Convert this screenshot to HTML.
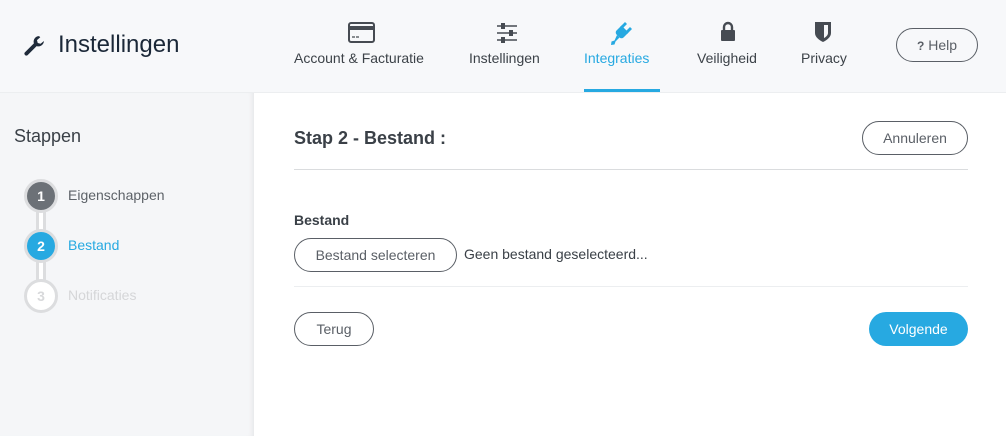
<!DOCTYPE html>
<html><head><meta charset="utf-8"><style>
*{box-sizing:border-box;margin:0;padding:0}
body{width:1006px;height:436px;overflow:hidden;background:#f7f8fa;font-family:"Liberation Sans",sans-serif;position:relative;color:#4a4f55}
.abs{position:absolute}
.nav{position:absolute;top:50px;font-size:14px;color:#3c4248;white-space:nowrap}
.ico{position:absolute}
.btn{position:absolute;border:1px solid #5a5f66;border-radius:17px;font-size:14px;color:#5a5f66;text-align:center;background:#fff}
.circ{position:absolute;left:24px;width:34px;height:34px;border-radius:50%;border:3px solid #dcdddf;font-size:14px;font-weight:bold;text-align:center;line-height:28px}
</style></head><body>
<svg class="ico" style="left:23px;top:35px" width="22" height="22" viewBox="0 0 20 20"><path d="M14.5 1a5 5 0 0 0-4.6 6.6L1.6 15.9a1.8 1.8 0 0 0 2.5 2.5l8.3-8.3A5 5 0 0 0 19 5.5l-3 2.5-2.6-.7-.7-2.6 3-2.6A5 5 0 0 0 14.5 1z" fill="#1f2b3a"/></svg>
<div class="abs" style="left:58px;top:31px;font-size:24px;color:#1b2838">Instellingen</div>

<svg class="ico" style="left:348px;top:22px" width="27" height="21" viewBox="0 0 27 21"><rect x="1" y="1" width="25" height="19" rx="2" fill="none" stroke="#464b52" stroke-width="2"/><rect x="1" y="4" width="25" height="4" fill="#464b52"/><path d="M4 15h3M8 15h3" stroke="#464b52" stroke-width="1.2"/></svg>
<div class="nav" style="left:294px">Account &amp; Facturatie</div>

<svg class="ico" style="left:496px;top:23px" width="22" height="20" viewBox="0 0 22 20"><path d="M1 3h20M1 10h20M1 17h20" stroke="#464b52" stroke-width="1.6"/><rect x="5" y="0" width="4" height="6" fill="#464b52"/><rect x="13" y="7" width="4" height="6" fill="#464b52"/><rect x="5" y="14" width="4" height="6" fill="#464b52"/></svg>
<div class="nav" style="left:469px">Instellingen</div>

<svg class="ico" style="left:608px;top:20px" width="26" height="26" viewBox="0 0 26 26"><g fill="#27a9e1"><path d="M6.5 12.5l7-7 7 7-5 5a3 3 0 0 1-4 0l-3-3a3 3 0 0 1 0-4z"/><path d="M12 7l5-5 2 2-5 5zM17 12l5-5 2 2-5 5z"/><path d="M9 15l2.5 2.5-4 4-1 3-3.5.5.5-3.5 3-1z"/></g></svg>
<div class="nav" style="left:584px;color:#27a9e1">Integraties</div>
<div class="abs" style="left:584px;top:89px;width:76px;height:3px;background:#27a9e1"></div>

<svg class="ico" style="left:720px;top:21px" width="16" height="20" viewBox="0 0 16 20"><path d="M4 9V6a4 4 0 0 1 8 0v3" fill="none" stroke="#464b52" stroke-width="2.4"/><rect x="1" y="9" width="14" height="11" rx="1" fill="#464b52"/></svg>
<div class="nav" style="left:697px">Veiligheid</div>

<svg class="ico" style="left:814px;top:21px" width="18" height="22" viewBox="0 0 18 22"><path d="M1 1h16v11c0 4-4 7-8 9-4-2-8-5-8-9z" fill="#464b52"/><path d="M10 4h4v8c0 2-2 4-4 5z" fill="#f7f8fa"/></svg>
<div class="nav" style="left:801px">Privacy</div>

<div class="btn" style="left:896px;top:28px;width:82px;height:34px;line-height:32px;background:transparent;color:#5a5f66"><b style="font-size:12px">?</b> Help</div>

<div class="abs" style="left:0;top:92px;width:1006px;height:1px;background:#eceef0"></div>
<div class="abs" style="left:0;top:93px;width:254px;height:343px;background:#f5f6f8;box-shadow:inset -5px 0 6px -4px rgba(0,0,0,.08)"></div>
<div class="abs" style="left:254px;top:93px;width:752px;height:343px;background:#fff"></div>

<div class="abs" style="left:14px;top:126px;font-size:18px;color:#3a4047">Stappen</div>
<div class="abs" style="left:36px;top:210px;width:10px;height:74px;background:#dcdddf"></div>
<div class="abs" style="left:39px;top:205px;width:4px;height:84px;background:#fff"></div>
<div class="circ" style="top:179px;background:#6c7177;color:#fff">1</div>
<div class="circ" style="top:229px;background:#27a9e1;color:#fff">2</div>
<div class="circ" style="top:279px;background:#fff;color:#d8d9db">3</div>
<div class="abs" style="left:68px;top:187px;font-size:14px;color:#5d6268">Eigenschappen</div>
<div class="abs" style="left:68px;top:237px;font-size:14px;color:#27a9e1">Bestand</div>
<div class="abs" style="left:68px;top:287px;font-size:14px;color:#d5d6d8">Notificaties</div>

<div class="abs" style="left:294px;top:128px;font-size:18px;color:#3a4047;font-weight:bold">Stap 2 - Bestand :</div>
<div class="btn" style="left:862px;top:121px;width:106px;height:34px;line-height:32px">Annuleren</div>
<div class="abs" style="left:294px;top:169px;width:674px;height:1px;background:#dadcde"></div>
<div class="abs" style="left:294px;top:212px;font-size:14px;font-weight:bold;color:#3a4047">Bestand</div>
<div class="btn" style="left:294px;top:238px;width:163px;height:34px;line-height:32px">Bestand selecteren</div>
<div class="abs" style="left:464px;top:246px;font-size:14px;color:#3a4047">Geen bestand geselecteerd...</div>
<div class="abs" style="left:294px;top:286px;width:674px;height:1px;background:#eceef0"></div>
<div class="btn" style="left:294px;top:312px;width:80px;height:34px;line-height:32px">Terug</div>
<div class="btn" style="left:869px;top:312px;width:99px;height:34px;line-height:34px;border:none;background:#27a9e1;color:#fff">Volgende</div>
</body></html>
